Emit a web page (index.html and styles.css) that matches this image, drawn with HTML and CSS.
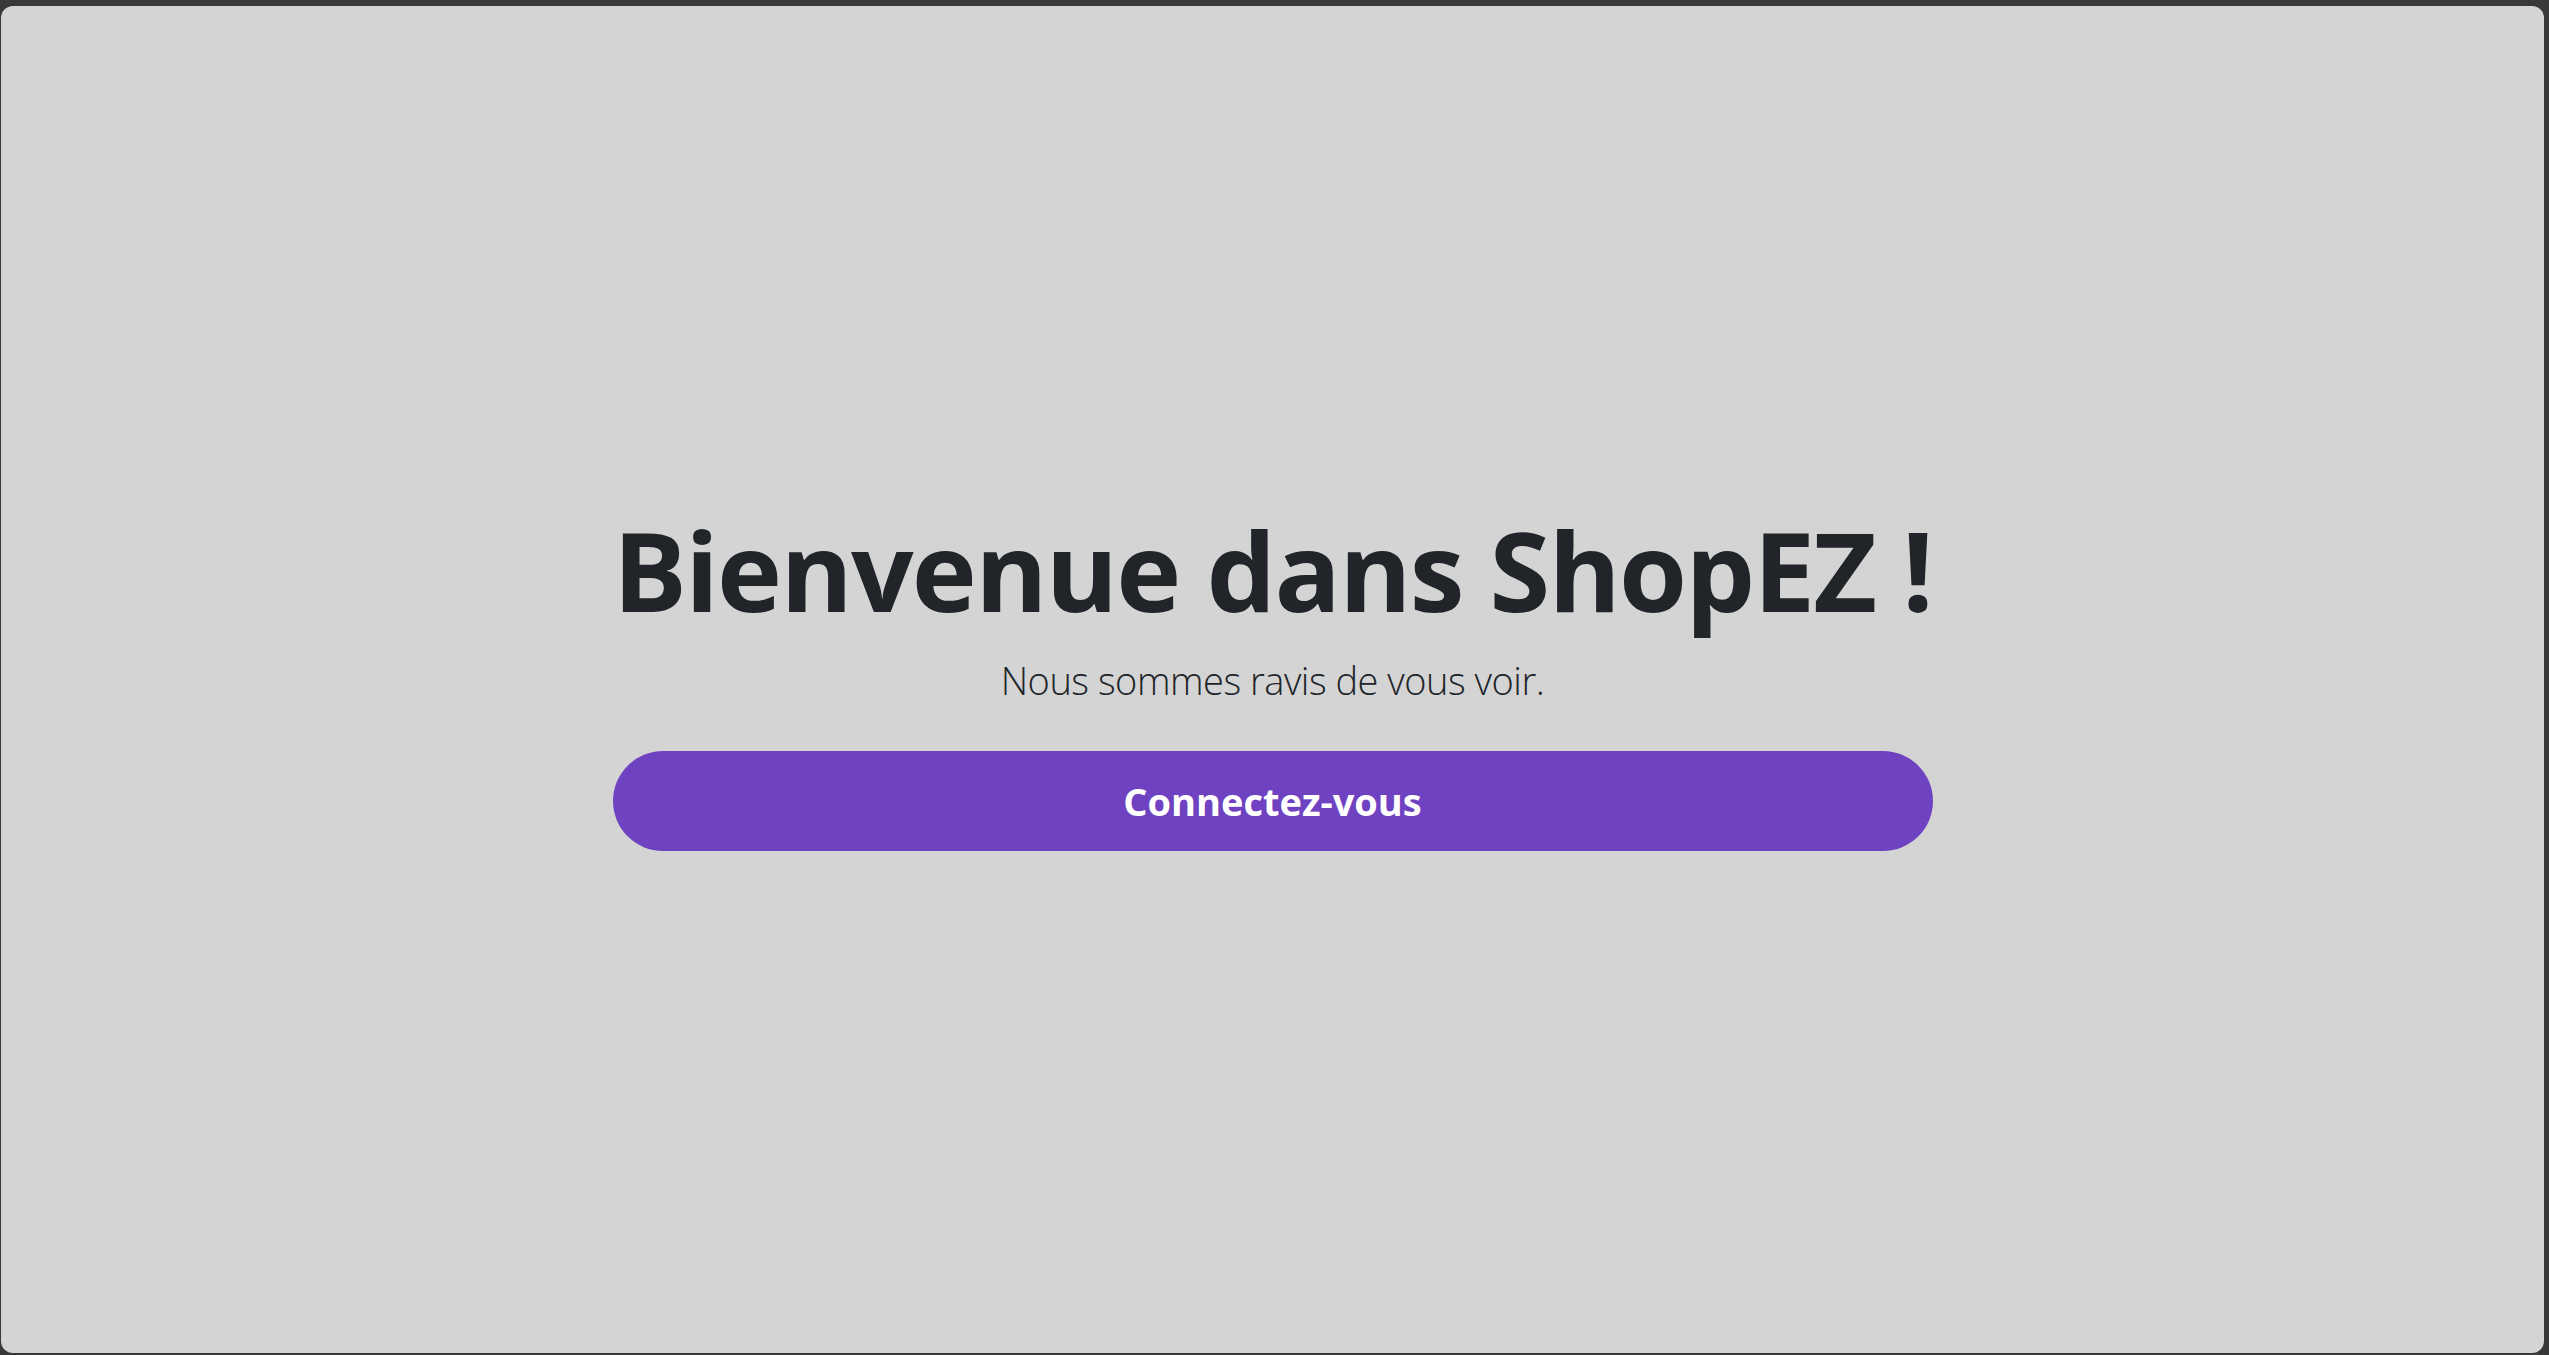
FILE: index.html
```html
<!DOCTYPE html>
<html lang="fr">
<head>
<meta charset="utf-8">
<title>ShopEZ</title>
<link rel="stylesheet" href="styles.css">
</head>
<body>
<main class="card">
  <section class="hero">
    <h1 class="hero-title">Bienvenue dans ShopEZ !</h1>
    <p class="hero-lead">Nous sommes ravis de vous voir.</p>
    <button class="hero-btn" type="button">Connectez-vous</button>
  </section>
</main>
</body>
</html>
```

FILE: styles.css
```css
html, body {
  height: 100%;
}
body {
  margin: 0;
  background: #393939;
  padding: 6px 5px 2px 1px;
  box-sizing: border-box;
  font-family: "Open Sans", "Noto Sans", "Liberation Sans", sans-serif;
}
.card {
  height: 100%;
  box-sizing: border-box;
  background: #d4d4d4;
  border-radius: 12px;
  display: flex;
  align-items: center;
  justify-content: center;
  padding-bottom: 6px;
}
.hero {
  display: flex;
  flex-direction: column;
  align-items: center;
  width: 1320px;
}
.hero-title {
  margin: 0;
  font-size: 110px;
  line-height: 134px;
  font-weight: 700;
  letter-spacing: -1.7px;
  color: #212529;
  white-space: nowrap;
}
.hero-lead {
  margin: 14px 0 0;
  font-size: 38px;
  line-height: 60px;
  font-weight: 300;
  letter-spacing: -0.5px;
  color: #212529;
}
.hero-btn {
  margin-top: 41px;
  width: 100%;
  height: 100px;
  border: 0;
  border-radius: 50px;
  background: #6f42c1;
  color: #ffffff;
  font-family: inherit;
  font-size: 38px;
  font-weight: 700;
  line-height: 60px;
  padding: 0;
}
```
